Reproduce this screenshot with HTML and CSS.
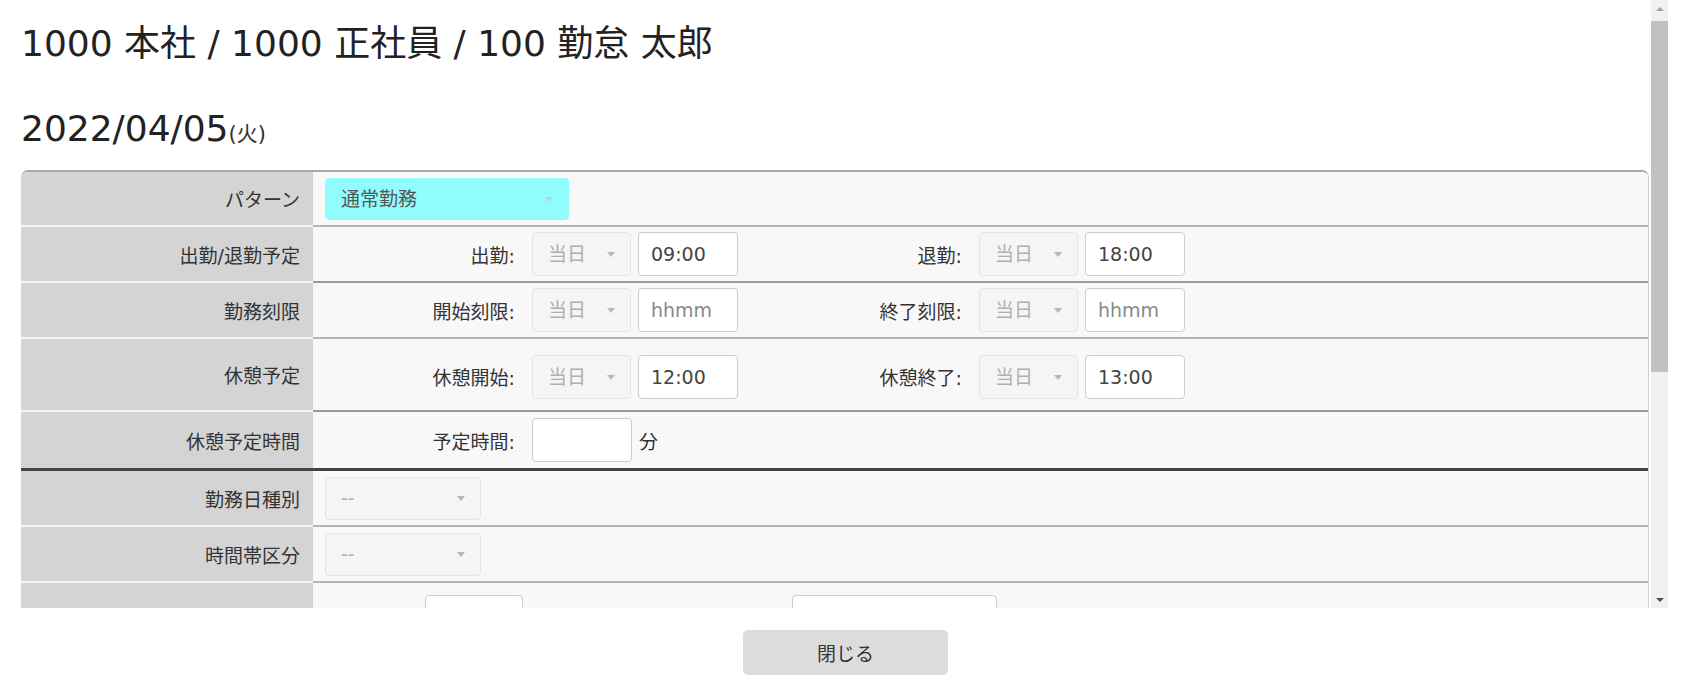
FILE: index.html
```html
<!DOCTYPE html>
<html lang="ja">
<head>
<meta charset="utf-8">
<title>勤務予定</title>
<link rel="stylesheet" href="styles.css">
</head>
<body>
<div class="page">
  <div class="viewport">
    <main class="content">
      <h1 class="title">1000 本社 / 1000 正社員 / 100 勤怠 太郎</h1>
      <h2 class="date">2022/04/05<small class="dow">(火)</small></h2>

      <div class="form">
        <div class="lbl r1">パターン</div>
        <div class="val r1">
          <span class="sel sel-pattern"><select><option>通常勤務</option></select></span>
        </div>

        <div class="lbl r2">出勤/退勤予定</div>
        <div class="val r2 dark">
          <div class="grp"><span class="grp-label">出勤:</span><span class="sel sel-day"><select disabled><option>当日</option></select></span><input class="time" value="09:00"></div>
          <div class="grp"><span class="grp-label">退勤:</span><span class="sel sel-day"><select disabled><option>当日</option></select></span><input class="time" value="18:00"></div>
        </div>

        <div class="lbl r3">勤務刻限</div>
        <div class="val r3">
          <div class="grp"><span class="grp-label">開始刻限:</span><span class="sel sel-day"><select disabled><option>当日</option></select></span><input class="time" placeholder="hhmm"></div>
          <div class="grp"><span class="grp-label">終了刻限:</span><span class="sel sel-day"><select disabled><option>当日</option></select></span><input class="time" placeholder="hhmm"></div>
        </div>

        <div class="lbl r4">休憩予定</div>
        <div class="val r4 dark">
          <div class="grp"><span class="grp-label">休憩開始:</span><span class="sel sel-day"><select disabled><option>当日</option></select></span><input class="time" value="12:00"></div>
          <div class="grp"><span class="grp-label">休憩終了:</span><span class="sel sel-day"><select disabled><option>当日</option></select></span><input class="time" value="13:00"></div>
        </div>

        <div class="lbl r5 thick">休憩予定時間</div>
        <div class="val r5 thick">
          <div class="grp"><span class="grp-label">予定時間:</span><input class="time mins"><span class="unit">分</span></div>
        </div>

        <div class="lbl r6">勤務日種別</div>
        <div class="val r6">
          <span class="sel sel-kind"><select disabled><option>--</option></select></span>
        </div>

        <div class="lbl r6">時間帯区分</div>
        <div class="val r6">
          <span class="sel sel-kind"><select disabled><option>--</option></select></span>
        </div>

        <div class="lbl r8"></div>
        <div class="val r8 top">
          <span class="gap-a"></span><input class="time narrow">
          <span class="gap-b"></span><input class="wide">
        </div>

        <div class="lbl r6"></div>
        <div class="val r6"></div>
        <div class="lbl r6"></div>
        <div class="val r6"></div>
        <div class="lbl r6"></div>
        <div class="val r6"></div>
        <div class="lbl r6"></div>
        <div class="val r6"></div>
        <div class="lbl r6"></div>
        <div class="val r6"></div>
      </div>
    </main>

    <div class="vscroll" aria-hidden="true">
      <span class="sb-btn sb-up"></span>
      <span class="sb-track"><span class="sb-thumb"></span></span>
      <span class="sb-btn sb-down"></span>
    </div>
  </div>

  <footer class="footer">
    <button class="close-btn" type="button">閉じる</button>
  </footer>
</div>
</body>
</html>
```

FILE: styles.css
```css
* { box-sizing: border-box; }

html, body {
  margin: 0;
  padding: 0;
  background: #ffffff;
}

body {
  font-family: "DejaVu Sans", "Noto Sans CJK JP", sans-serif;
  font-size: 19px;
  color: #333333;
  overflow: hidden;
}

.page {
  width: 1683px;
  height: 692px;
  display: flex;
  flex-direction: column;
}

.viewport {
  width: 1668px;
  height: 608px;
  flex: none;
  display: flex;
}

.content {
  flex: 1;
  min-width: 0;
  overflow: hidden;
  padding: 0 2px 0 21px;
}

/* scrollbar column */
.vscroll {
  width: 17px;
  flex: none;
  display: flex;
  flex-direction: column;
  background: #f1f1f1;
}

.sb-btn {
  height: 17px;
  flex: none;
  display: flex;
  align-items: center;
  justify-content: center;
}

.sb-btn::before {
  content: "";
  border-left: 4px solid transparent;
  border-right: 4px solid transparent;
}

.sb-up::before { border-bottom: 4px solid #a3a3a3; }
.sb-down::before { border-top: 4px solid #505050; }

.sb-track {
  flex: 1;
  display: flex;
  flex-direction: column;
}

.sb-thumb {
  margin-top: 4px;
  height: 351px;
  background: #c1c1c1;
}

.title {
  margin: 22px 0 0 0;
  font-size: 36px;
  line-height: 44px;
  font-weight: normal;
  color: #222222;
}

.date {
  margin: 41px 0 0 0;
  font-size: 36px;
  line-height: 44px;
  font-weight: normal;
  color: #222222;
}

.dow {
  font-size: 21px;
  color: #333333;
}

.form {
  margin-top: 14px;
  display: grid;
  grid-template-columns: 292px 1fr;
  border-top: 2px solid #a8a8a8;
  border-right: 1px solid #cfcfcf;
  border-radius: 7px 7px 0 0;
  overflow: hidden;
}

.lbl {
  background: #d4d4d4;
  border-bottom: 2px solid #f4f4f4;
  display: flex;
  align-items: center;
  justify-content: flex-end;
  padding-right: 13px;
  color: #333333;
  white-space: nowrap;
}

.val {
  background: #f8f8f8;
  border-bottom: 2px solid #b4b4b4;
  display: flex;
  align-items: center;
  padding-left: 12px;
}

.val.dark { border-bottom-color: #9a9a9a; }

.r1 { height: 55px; }
.r2 { height: 56px; }
.r3 { height: 56px; }
.r4 { height: 73px; padding-top: 4px; }
.r5 { height: 59px; }
.r6 { height: 56px; }
.r8 { height: 90px; }

.lbl.r4 { padding-top: 0; }

.thick { border-bottom: 3px solid #444444; }
.lbl.thick { border-bottom-color: #444444; }

.val.top { align-items: flex-start; padding-top: 12px; }

.gap-a { width: 100px; flex: none; }
.gap-b { width: 269px; flex: none; }

.grp {
  display: flex;
  align-items: center;
  margin-right: 34px;
}

.grp-label {
  width: 190px;
  text-align: right;
  margin-right: 17px;
  color: #333333;
  white-space: nowrap;
}

.sel {
  position: relative;
  display: inline-block;
}

.sel select {
  -webkit-appearance: none;
  appearance: none;
  font-family: inherit;
  font-size: 19px;
  height: 44px;
  border: 1px solid #e4e4e4;
  border-radius: 4px;
  background: #f5f5f5;
  color: #b0b0b0;
  padding: 0 30px 0 15px;
  opacity: 1;
  margin: 0;
}

.sel::after {
  content: "";
  position: absolute;
  right: 16px;
  top: 50%;
  margin-top: -2px;
  border-left: 4px solid transparent;
  border-right: 4px solid transparent;
  border-top: 5px solid #b8b8b8;
  pointer-events: none;
}

.sel-pattern select {
  width: 244px;
  height: 42px;
  background: #90fcfc;
  border-color: #90fcfc;
  color: #555555;
}
.sel-pattern::after { border-top-color: #b6d6d6; }

.sel-day { margin-right: 7px; }
.sel-day select { width: 99px; }

.sel-kind select { width: 156px; height: 43px; }

.time,
.wide {
  font-family: inherit;
  font-size: 19px;
  height: 44px;
  width: 100px;
  border: 1px solid #cccccc;
  border-radius: 4px;
  background: #ffffff;
  color: #444444;
  padding: 0 12px;
  margin: 0;
}
.time::placeholder,
.wide::placeholder { color: #888888; }

.time.narrow { width: 98px; }
.wide { width: 205px; }

.unit {
  margin-left: 7px;
  color: #333333;
}

.footer {
  flex: 1;
  display: flex;
  justify-content: center;
  align-items: flex-start;
  padding: 22px 0 0 8px;
}

.close-btn {
  width: 205px;
  height: 45px;
  border: none;
  border-radius: 5px;
  background: #dcdcdc;
  color: #333333;
  font-family: inherit;
  font-size: 19px;
}
```
